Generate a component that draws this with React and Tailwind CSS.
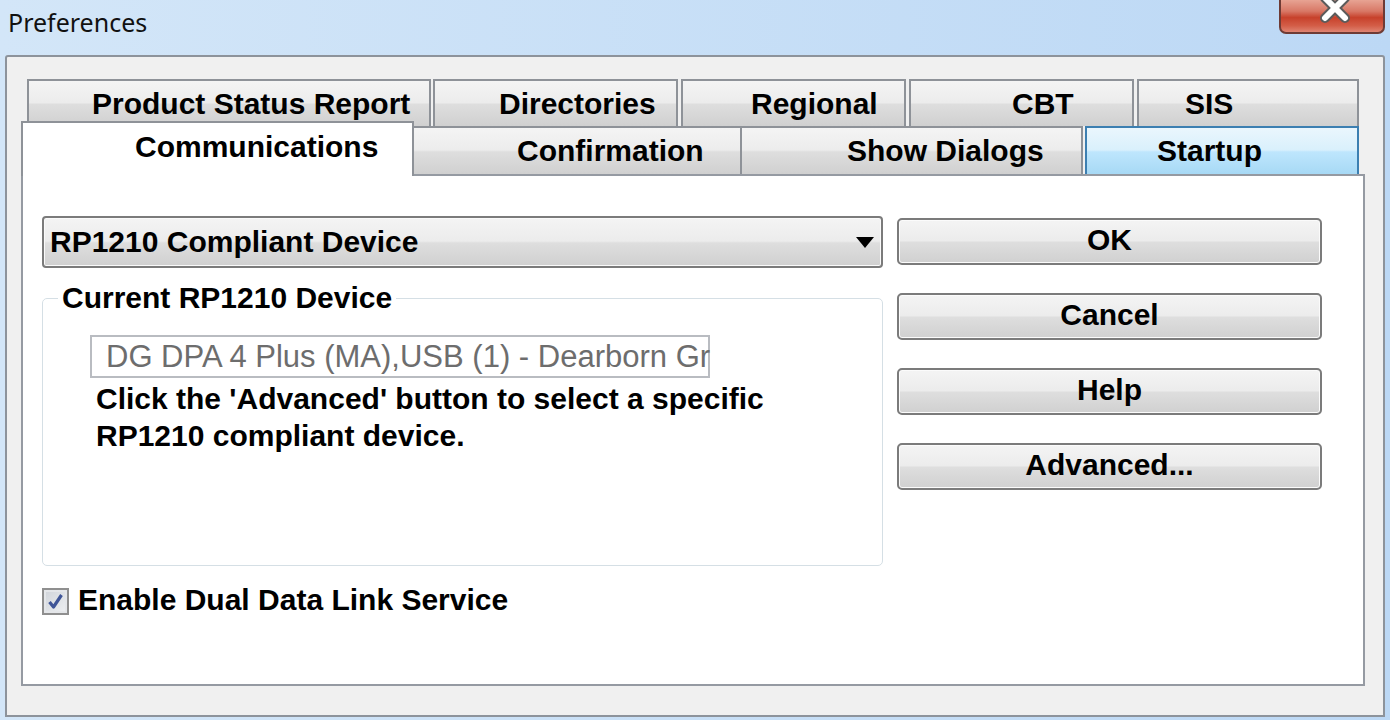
import React from 'react';

const tabGrad = 'bg-[linear-gradient(to_bottom,#f4f4f4_0%,#ececec_48%,#dedede_52%,#d0d0d0_100%)]';

const backRow = [
  { label: 'Product Status Report', cls: 'w-[404px] pl-[63px]' },
  { label: 'Directories', cls: 'w-[245px] pl-[64px] ml-[2px]' },
  { label: 'Regional', cls: 'w-[225px] pl-[68px] ml-[3px]' },
  { label: 'CBT', cls: 'w-[225px] pl-[101px] ml-[3px]' },
  { label: 'SIS', cls: 'w-[222px] pl-[46px] ml-[3px]' },
];

const Button = ({ children }) => (
  <button
    className={`h-[47px] w-full rounded-[5px] border-2 border-[#7b7b7b] ${tabGrad} shadow-[inset_0_0_0_1px_#fbfbfb] flex items-center justify-center pb-[3px] text-[30px] font-bold text-black leading-none`}
  >
    {children}
  </button>
);

/**
 * Windows 7 style preferences dialog
 */
export default function App() {
  return (
    <div className="w-[1390px] h-[720px] overflow-hidden bg-[linear-gradient(to_right,#d3e6f8,#bcd8f5)] font-['Liberation_Sans',Arial,sans-serif] text-black">
      {/* title bar */}
      <div className="h-[55px] flex justify-between">
        <div className="pl-[8px] pt-[5px] font-['Noto_Sans',sans-serif] text-[25px] leading-[34px] text-[#111]">
          Preferences
        </div>
        <div className="relative mr-[5px] w-[106px] h-[34px] rounded-b-[7px] border-2 border-t-0 border-[#6e3b35] bg-[linear-gradient(to_bottom,#e7a393_0%,#d87866_35%,#c7412b_55%,#d35d47_80%,#df8472_100%)] overflow-hidden">
          <svg className="absolute left-[38px] top-[-6px]" width="32" height="30" viewBox="0 0 32 30">
            <path d="M6 4 L26 24 M26 4 L6 24" stroke="#5b5b5b" strokeWidth="10" strokeLinecap="round" />
            <path d="M6 4 L26 24 M26 4 L6 24" stroke="#ffffff" strokeWidth="6" strokeLinecap="round" />
          </svg>
        </div>
      </div>

      {/* window body */}
      <div className="ml-[5px] w-[1380px] h-[662px] border-2 border-[#8d939b] rounded-t-[3px] bg-[#f0f0f0] pl-[14px] pt-[22px]">
        <div className="w-[1344px]">
          {/* back tab row */}
          <div className="flex h-[47px] pl-[6px]">
            {backRow.map((t) => (
              <div
                key={t.label}
                className={`${t.cls} h-[47px] border-2 border-b-0 border-[#8e9298] ${tabGrad} flex items-center text-[30px] font-bold leading-none`}
              >
                {t.label}
              </div>
            ))}
          </div>

          {/* front tab row */}
          <div className="flex items-end h-[48px]">
            <div className="relative z-10 -mb-[2px] w-[393px] h-[55px] border-2 border-b-0 border-[#8e9298] bg-white pl-[112px] pb-[6px] flex items-center text-[30px] font-bold leading-none">
              Communications
            </div>
            <div className={`w-[328px] h-[48px] border-2 border-b-0 border-l-0 border-[#8e9298] ${tabGrad} pl-[103px] flex items-center text-[30px] font-bold leading-none`}>
              Confirmation
            </div>
            <div className={`w-[341px] h-[48px] border-2 border-b-0 border-l-0 border-[#8e9298] ${tabGrad} pl-[105px] flex items-center text-[30px] font-bold leading-none`}>
              Show Dialogs
            </div>
            <div className="ml-[2px] w-[274px] h-[48px] border-2 border-b-0 border-[#3c7fb1] bg-[linear-gradient(to_bottom,#eaf6fd_0%,#d9f0fc_48%,#bee6fd_52%,#a7d9f5_100%)] pl-[70px] flex items-center text-[30px] font-bold leading-none">
              Startup
            </div>
          </div>

          {/* tab page */}
          <div className="h-[512px] border-2 border-[#959aa2] bg-white pl-[19px] pt-[40px] flex">
            <div className="w-[841px] flex flex-col">
              {/* combo box */}
              <div className={`h-[52px] rounded-[4px] border-2 border-[#7b7b7b] ${tabGrad} shadow-[inset_0_0_0_1px_#fafafa] flex items-center justify-between pl-[6px] pr-[7px]`}>
                <span className="text-[30px] font-bold leading-none">RP1210 Compliant Device</span>
                <svg width="18" height="11" viewBox="0 0 18 11">
                  <path d="M0 0 H18 L9 11 Z" fill="#000" />
                </svg>
              </div>

              {/* group box */}
              <fieldset className="mt-[13px] h-[285px] border border-[#d5dfe5] rounded-[5px]">
                <legend className="ml-[15px] px-[4px] text-[30px] font-bold leading-[34px]">
                  Current RP1210 Device
                </legend>
                <div className="ml-[47px] mt-[20px] w-[620px] h-[43px] border-2 border-[#b9bcc1] bg-white pl-[14px] flex items-center whitespace-nowrap text-[31px] text-[#6d6d6d] leading-none">
                  DG DPA 4 Plus (MA),USB (1) - Dearborn Gr
                </div>
                <p className="ml-[53px] mt-[2px] text-[30px] font-bold leading-[37px]">
                  Click the 'Advanced' button to select a specific
                  <br />
                  RP1210 compliant device.
                </p>
              </fieldset>

              {/* checkbox */}
              <div className="mt-[19px] flex items-center gap-[9px]">
                <div className="w-[27px] h-[27px] border-2 border-[#8f8f8f] bg-[linear-gradient(to_bottom_right,#cfd3d9,#eef0f2)] shadow-[inset_0_0_0_2px_#e4e6e9] flex items-center justify-center">
                  <svg width="17" height="17" viewBox="0 0 17 17">
                    <path d="M2.5 9 L6.5 14 L14.5 2" stroke="#3f5598" strokeWidth="3.2" fill="none" strokeLinejoin="round" />
                  </svg>
                </div>
                <span className="pb-[3px] text-[30px] font-bold leading-none">Enable Dual Data Link Service</span>
              </div>
            </div>

            {/* buttons */}
            <div className="ml-[14px] w-[425px] pt-[2px] flex flex-col gap-[28px]">
              <Button>OK</Button>
              <Button>Cancel</Button>
              <Button>Help</Button>
              <Button>Advanced...</Button>
            </div>
          </div>
        </div>
      </div>
    </div>
  );
}
